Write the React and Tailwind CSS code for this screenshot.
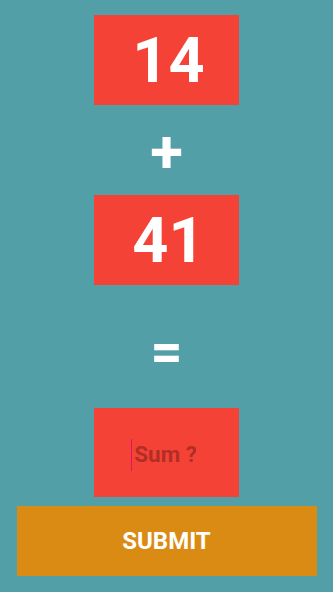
import React, { useState } from 'react';

const font = { fontFamily: 'Roboto, "Liberation Sans", sans-serif' };

/**
 * Number tile
 */
const NumberBox = ({ value }) => {
	return (
		<div className="flex h-[90px] w-[145px] items-center justify-center bg-[#f44336]">
			<span className="pl-[4px] text-[63px] font-bold leading-none text-white">{value}</span>
		</div>
	);
};

const App = () => {
	const [sum, setSum] = useState('');

	return (
		<div
			className="flex h-[592px] w-[333px] flex-col items-center bg-[#539fa7]"
			style={font}
		>
			<div className="mt-[15px]">
				<NumberBox value="14" />
			</div>
			<div className="flex h-[90px] items-center justify-center pt-[4px]">
				<span className="text-[60px] font-bold leading-none text-white">+</span>
			</div>
			<NumberBox value="41" />
			<div className="flex h-[123px] items-center justify-center pt-[10px]">
				<span className="text-[56px] font-bold leading-none text-white">=</span>
			</div>
			<div className="flex h-[89px] w-[145px] items-center justify-center bg-[#f44336] pt-[5px]">
				<div className="mr-[6px] flex items-center">
					<span className="mr-[2px] h-[32px] w-[1.5px] bg-[#d81b60]" />
					<input
						className="w-[62px] bg-transparent text-left text-[22.5px] font-bold text-[#a52a22] outline-none placeholder:text-[#a52a22]/85"
						placeholder="Sum ?"
						value={sum}
						onChange={(e) => setSum(e.target.value)}
					/>
				</div>
			</div>
			<button className="mt-[9px] flex h-[70px] w-[300px] items-center justify-center bg-[#d98b14] text-[24px] font-bold text-white">
				SUBMIT
			</button>
		</div>
	);
};

export default App;
